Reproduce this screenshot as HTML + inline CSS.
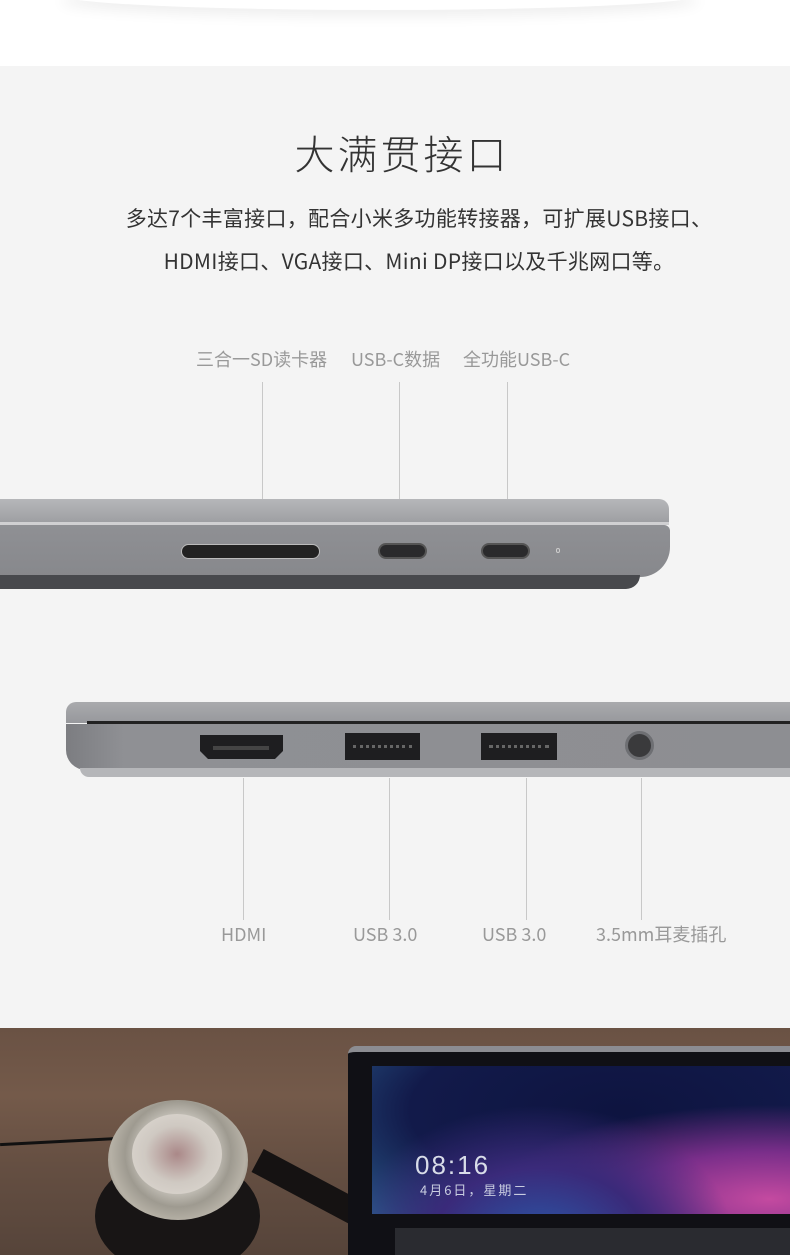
<!DOCTYPE html>
<html><head><meta charset="utf-8"><style>
*{margin:0;padding:0;box-sizing:border-box}
body{width:790px;height:1255px;overflow:hidden;background:#fff;font-family:"Noto Sans CJK SC","Liberation Sans",sans-serif;position:relative}
.a{position:absolute}
.t{white-space:nowrap}
.l{font-size:18px;color:#999;line-height:24px}
</style></head><body>
<div class="a" style="left:60px;top:-20px;width:640px;height:30px;border-radius:50%;box-shadow:0 6px 14px rgba(0,0,0,0.07)"></div>
<div class="a" style="left:0;top:66px;width:790px;height:962px;background:#f4f4f4"></div>
<div class="a t" style="left:0;width:790px;top:124px;text-align:center;font-size:40px;line-height:56px;color:#333;letter-spacing:3px;padding-left:14px;font-weight:300">大满贯接口</div>
<div class="a t" style="left:0;width:790px;top:197px;text-align:center;font-size:21px;color:#333;line-height:43px;padding-left:48px;letter-spacing:0.3px">多达7个丰富接口，配合小米多功能转接器，可扩展USB接口、<br>HDMI接口、VGA接口、Mini DP接口以及千兆网口等。</div>
<div class="a t l" style="left:196px;top:347px">三合一SD读卡器</div>
<div class="a t l" style="left:351px;top:347px">USB-C数据</div>
<div class="a t l" style="left:463px;top:347px">全功能USB-C</div>
<div class="a" style="left:262px;top:382px;width:1px;height:143px;background:#c8c8c8"></div>
<div class="a" style="left:399px;top:382px;width:1px;height:143px;background:#c8c8c8"></div>
<div class="a" style="left:507px;top:382px;width:1px;height:143px;background:#c8c8c8"></div>
<!-- laptop 1 -->
<div class="a" style="left:0;top:499px;width:669px;height:24px;background:linear-gradient(#b6b7ba,#9d9ea2);border-radius:0 10px 0 0"></div>
<div class="a" style="left:0;top:522px;width:669px;height:3px;background:#d0d0d2"></div>
<div class="a" style="left:0;top:525px;width:670px;height:52px;background:linear-gradient(#8f9094,#87888c);border-radius:0 6px 30px 0"></div>
<div class="a" style="left:0;top:575px;width:640px;height:14px;background:#48494d;border-radius:0 0 40px 0"></div>
<div class="a" style="left:181px;top:544px;width:139px;height:15px;background:#222;border-radius:8px;border:1px solid #bbb"></div>
<div class="a" style="left:378px;top:543px;width:49px;height:16px;background:#2a2a2c;border-radius:8px;border:2px solid #555"></div>
<div class="a" style="left:481px;top:543px;width:49px;height:16px;background:#2a2a2c;border-radius:8px;border:2px solid #555"></div>
<div class="a" style="left:556px;top:548px;width:4px;height:5px;border:1px solid #ccc;border-radius:2px"></div>
<!-- laptop 2 -->
<div class="a" style="left:66px;top:702px;width:724px;height:21px;background:linear-gradient(#a9aaad,#97989c);border-radius:10px 0 0 0"></div>
<div class="a" style="left:87px;top:721px;width:703px;height:3px;background:#222"></div>
<div class="a" style="left:66px;top:724px;width:724px;height:46px;background:linear-gradient(90deg,#7c7d81,#8f9094 8%,#8d8e92);border-radius:0 0 0 20px"></div>
<div class="a" style="left:80px;top:768px;width:710px;height:9px;background:#b5b6b9;border-radius:0 0 0 30px"></div>
<svg class="a" style="left:199px;top:734px" width="85" height="26"><path d="M1 1H84V17L76 25H9L1 17Z" fill="#1e1e20"/><rect x="14" y="12" width="56" height="4" fill="#444"/></svg>
<div class="a" style="left:345px;top:733px;width:75px;height:27px;background:#1e1e20"><div style="margin:12px 8px 0;height:4px;border-top:3px dotted #666"></div></div>
<div class="a" style="left:481px;top:733px;width:76px;height:27px;background:#1e1e20"><div style="margin:12px 8px 0;height:4px;border-top:3px dotted #666"></div></div>
<div class="a" style="left:625px;top:731px;width:29px;height:29px;border-radius:50%;background:#3a3a3c;border:3px solid #6e6f73"></div>
<div class="a" style="left:243px;top:778px;width:1px;height:142px;background:#c8c8c8"></div>
<div class="a" style="left:389px;top:778px;width:1px;height:142px;background:#c8c8c8"></div>
<div class="a" style="left:526px;top:778px;width:1px;height:142px;background:#c8c8c8"></div>
<div class="a" style="left:641px;top:778px;width:1px;height:142px;background:#c8c8c8"></div>
<div class="a t l" style="left:221px;top:922px">HDMI</div>
<div class="a t l" style="left:353px;top:922px">USB 3.0</div>
<div class="a t l" style="left:482px;top:922px">USB 3.0</div>
<div class="a t l" style="left:596px;top:922px">3.5mm耳麦插孔</div>
<!-- photo -->
<div class="a" style="left:0;top:1028px;width:790px;height:227px;background:linear-gradient(180deg,#6a5244,#745a4a 30%,#654f42 60%,#56443a);overflow:hidden">
 <div class="a" style="left:0;top:112px;width:120px;height:3px;background:#111;transform:rotate(-3deg)"></div>
 <div class="a" style="left:95px;top:128px;width:165px;height:120px;border-radius:50%;background:#181515"></div>
 <div class="a" style="left:108px;top:72px;width:140px;height:120px;border-radius:50%;background:radial-gradient(circle at 50% 45%,#d9d6cf 0,#cfcbc3 35%,#9e9a90 55%,#b6b1a6 70%,#6a655c 100%)"></div>
 <div class="a" style="left:132px;top:86px;width:90px;height:80px;border-radius:50%;background:radial-gradient(#a88 0,#cfc9c2 50%,#e0dbd4 100%)"></div>
 <div class="a" style="left:250px;top:150px;width:130px;height:26px;background:#151212;transform:rotate(28deg)"></div>
 <div class="a" style="left:348px;top:18px;width:460px;height:230px;background:#101015;border-radius:8px 0 0 0;border-top:6px solid #8c8d92"></div>
 <div class="a" style="left:372px;top:38px;width:418px;height:148px;background:radial-gradient(ellipse at 40% 120%,#2a58a8 0,#3a2a7a 30%,transparent 55%),radial-gradient(ellipse at 95% 90%,#c44aa0 0,#7a2e8a 25%,transparent 50%),radial-gradient(ellipse at 60% 30%,#0e1440 0,#121a4a 60%,#2a5a8a 100%)"></div>
 <div class="a t" style="left:415px;top:122px;font-size:26px;color:#d8dce8;letter-spacing:2px;font-family:'Liberation Sans',sans-serif">08:16</div>
 <div class="a t" style="left:420px;top:152px;font-size:13px;color:#c8cce0;letter-spacing:2px">4月6日，星期二</div>
 <div class="a" style="left:395px;top:200px;width:395px;height:27px;background:#2a2b30"></div>
</div>
</body></html>
